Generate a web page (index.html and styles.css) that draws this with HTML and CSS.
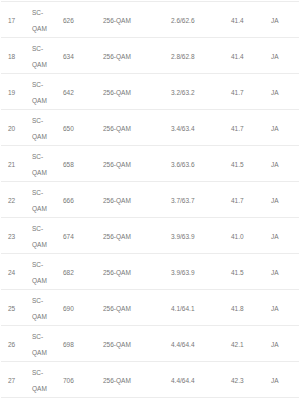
FILE: index.html
```html
<!DOCTYPE html>
<html lang="de">
<head>
    <meta charset="UTF-8">
    <meta name="viewport" content="width=device-width, initial-scale=1.0">
    <title>Downstream-Kanäle</title>
    <link rel="stylesheet" href="styles.css">
</head>
<body>
    <table class="channels">
        <colgroup>
            <col class="c-id">
            <col class="c-type">
            <col class="c-freq">
            <col class="c-mod">
            <col class="c-snr">
            <col class="c-lvl">
            <col class="c-lock">
        </colgroup>
        <tbody id="rows"></tbody>
    </table>

    <script>
        // Kanalliste (Ausschnitt)
        const channels = [
            [17, 626, '2.6/62.6', '41.4'],
            [18, 634, '2.8/62.8', '41.4'],
            [19, 642, '3.2/63.2', '41.7'],
            [20, 650, '3.4/63.4', '41.7'],
            [21, 658, '3.6/63.6', '41.5'],
            [22, 666, '3.7/63.7', '41.7'],
            [23, 674, '3.9/63.9', '41.0'],
            [24, 682, '3.9/63.9', '41.5'],
            [25, 690, '4.1/64.1', '41.8'],
            [26, 698, '4.4/64.4', '42.1'],
            [27, 706, '4.4/64.4', '42.3']
        ];

        const tbody = document.getElementById('rows');
        channels.forEach(ch => {
            const tr = document.createElement('tr');
            tr.innerHTML =
                `<td>${ch[0]}</td>
                <td>SC-QAM</td>
                <td>${ch[1]}</td>
                <td>256-QAM</td>
                <td>${ch[2]}</td>
                <td>${ch[3]}</td>
                <td>JA</td>`;
            tbody.appendChild(tr);
        });
    </script>
</body>
</html>
```

FILE: styles.css
```css
body {
    margin: 0;
    padding-top: 1px;
    background: #fff;
    font-family: "Liberation Sans", Arial, sans-serif;
    font-size: 6.5px;
    color: #777;
}

.channels {
    table-layout: fixed;
    width: 298px;
    margin-left: 1px;
    border-collapse: collapse;
    border-top: 1px solid #ececec;
}

.channels td {
    padding: 3px 4px 0 7px;
    line-height: 16px;
    border-bottom: 1px solid #ececec;
    vertical-align: middle;
    text-align: left;
}

.c-id { width: 24px; }
.c-type { width: 31px; }
.c-freq { width: 40px; }
.c-mod { width: 68px; }
.c-snr { width: 60px; }
.c-lvl { width: 40px; }
.c-lock { width: 35px; }
```
